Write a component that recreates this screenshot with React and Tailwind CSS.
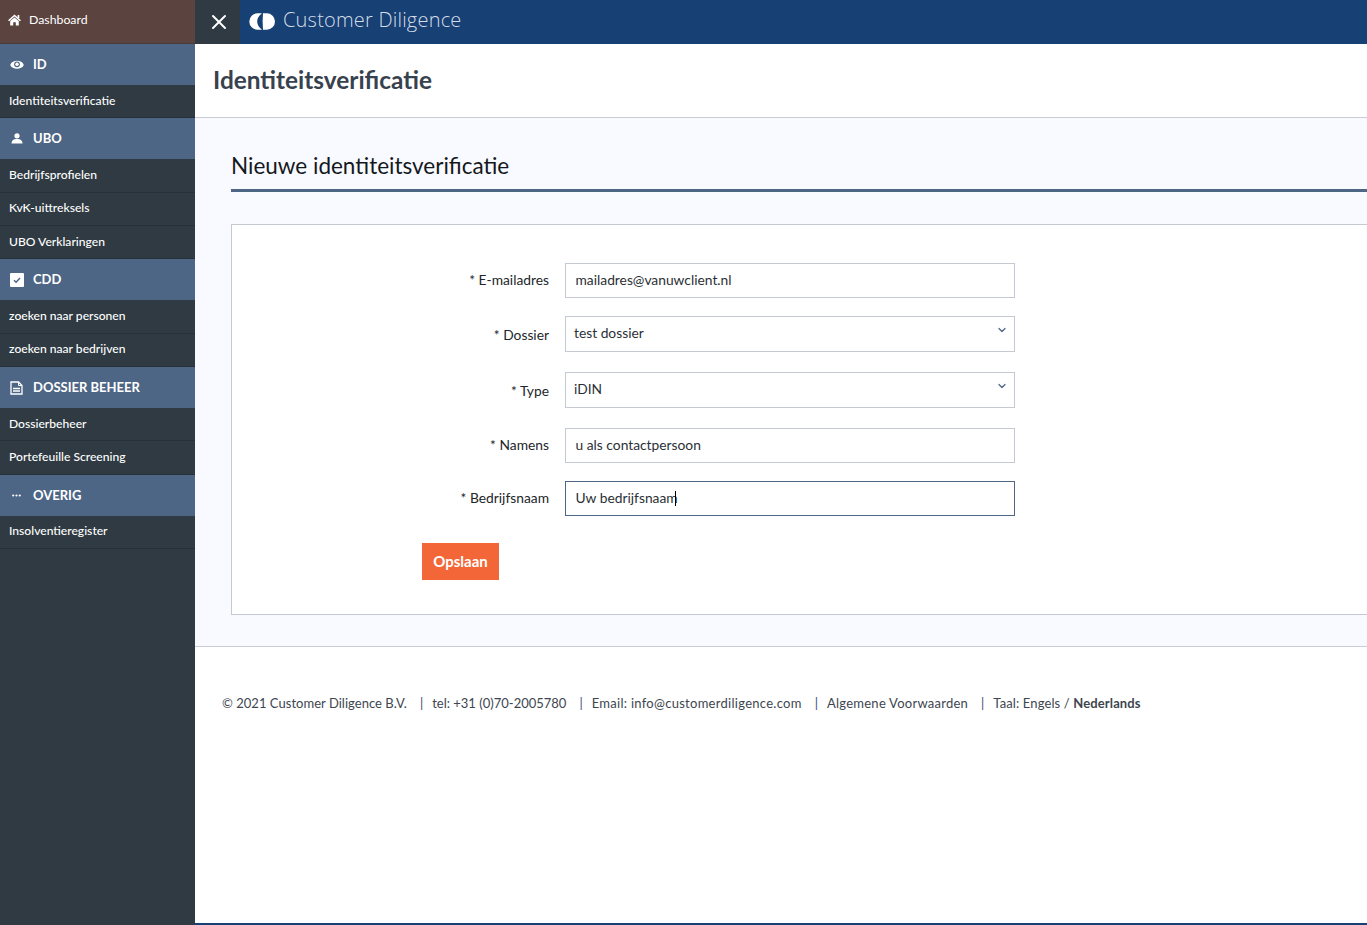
import { ChevronDown, X } from 'lucide-react';

const SECTIONS = [
  { title: 'ID', icon: <EyeIcon />, items: ['Identiteitsverificatie'] },
  { title: 'UBO', icon: <UserIcon />, items: ['Bedrijfsprofielen', 'KvK-uittreksels', 'UBO Verklaringen'] },
  { title: 'CDD', icon: <CheckIcon />, items: ['zoeken naar personen', 'zoeken naar bedrijven'] },
  { title: 'DOSSIER BEHEER', icon: <FileIcon />, items: ['Dossierbeheer', 'Portefeuille Screening'] },
  { title: 'OVERIG', icon: <DotsIcon />, items: ['Insolventieregister'] },
];

const FOOTER = [
  { text: '© 2021 Customer Diligence B.V.', className: 'tracking-[0.03px]' },
  { text: 'tel: +31 (0)70-2005780', className: '' },
  { text: 'Email: info@customerdiligence.com', className: 'tracking-[0.28px]' },
  { text: 'Algemene Voorwaarden', className: 'tracking-[0.25px]' },
];

function HomeIcon() {
  return (
    <svg width="13" height="12" viewBox="0 0 13 12" fill="white">
      <path d="M6.5 0.5 L13 6.3 L11.8 7.2 L6.5 2.6 L1.2 7.2 L0 6.3 Z" />
      <path d="M2.2 7 L6.5 3.4 L10.8 7 V11.6 H7.8 V8.2 H5.2 V11.6 H2.2 Z" />
      <rect x="9.6" y="1" width="1.7" height="3" />
    </svg>
  );
}

function EyeIcon() {
  return (
    <svg width="14" height="10" viewBox="0 0 14 10" fill="none">
      <path d="M0.2 5 C2.2 -0.6 11.8 -0.6 13.8 5 C11.8 10 2.2 10 0.2 5 Z" fill="white" />
      <circle cx="7" cy="4.3" r="2.9" fill="#4d6685" />
      <circle cx="7" cy="4.3" r="1.7" fill="white" />
    </svg>
  );
}

function UserIcon() {
  return (
    <svg width="12" height="11" viewBox="0 0 12 11" fill="white">
      <circle cx="6" cy="2.8" r="2.6" />
      <path d="M0.5 10.5 C0.5 7.4 2.8 6 6 6 C9.2 6 11.5 7.4 11.5 10.5 Z" />
    </svg>
  );
}

function CheckIcon() {
  return (
    <svg width="14" height="14" viewBox="0 0 14 14">
      <rect width="14" height="14" rx="1" fill="white" />
      <path d="M4 7.2 L6.1 9.2 L10 5" fill="none" stroke="#4d6685" strokeWidth="1.5" />
    </svg>
  );
}

function FileIcon() {
  return (
    <svg width="13" height="14" viewBox="0 0 13 14" fill="none" stroke="white">
      <path d="M1 1 H8.5 L12 4.5 V13 H1 Z" strokeWidth="1.3" />
      <path d="M8.5 1 V4.5 H12" strokeWidth="1" />
      <path d="M3 7.5 H10 M3 10 H10" strokeWidth="1.3" />
    </svg>
  );
}

function DotsIcon() {
  return (
    <svg width="9" height="3" viewBox="0 0 9 3" fill="white">
      <circle cx="1.2" cy="1.5" r="1.1" />
      <circle cx="4.5" cy="1.5" r="1.1" />
      <circle cx="7.8" cy="1.5" r="1.1" />
    </svg>
  );
}

function Logo() {
  return (
    <svg width="26" height="17" viewBox="0 0 26 17" fill="white">
      <path d="M13 0.3 H8.5 A8.2 8.2 0 0 0 8.5 16.7 H13 C9.6 14 8.2 11.3 8.2 8.5 C8.2 5.7 9.6 3 13 0.3 Z" />
      <path d="M14 0.3 H17.8 A8.2 8.2 0 0 1 17.8 16.7 H14 Q13.2 8.5 14 0.3 Z" />
    </svg>
  );
}

function Field({ label, value, mb = 'mb-[18px]', focused }) {
  return (
    <div className={`flex items-center ${mb}`}>
      <label className="w-[184px] pr-4 text-right text-[13.8px] text-[#22262a] shrink-0">* {label}</label>
      <div className={`w-[450px] h-[35px] border flex items-center pl-[9.5px] text-[13.8px] text-[#2a3036] bg-white ${focused ? 'border-[#4d6685]' : 'border-[#c5c9d2]'}`}>
        {value}
        {focused && <span className="inline-block -ml-[3px] w-px h-[15px] bg-black" />}
      </div>
    </div>
  );
}

function Select({ label, value, mb }) {
  return (
    <div className={`flex items-center ${mb}`}>
      <label className="w-[184px] pr-4 text-right text-[13.8px] text-[#22262a] shrink-0 pt-[2px]">* {label}</label>
      <div className="w-[450px] h-[36px] border border-[#c5c9d2] flex justify-between pl-2 pr-[6px] text-[13.8px] text-[#2a3036] bg-white">
        <span className="self-center pb-[2px]">{value}</span>
        <ChevronDown size={12} strokeWidth={2.5} className="text-[#4d6685] mt-[7px]" />
      </div>
    </div>
  );
}

export default function App() {
  return (
    <div className="flex h-[925px] w-[1367px] overflow-hidden bg-white font-['Lato','Noto_Sans',sans-serif]">
      <aside className="w-[195px] shrink-0 bg-[#2f3a42] text-white">
        <div className="h-[44px] bg-[#5b4340] flex items-center pl-2 pb-[3px] gap-[8px] text-[12.3px] border-b border-[#4a3a3a]">
          <HomeIcon />
          Dashboard
        </div>
        {SECTIONS.map((section) => (
          <div key={section.title}>
            <div className="h-[41px] bg-[#4d6685] flex items-center font-bold text-[13px]">
              <span className="w-[33px] flex justify-center">{section.icon}</span>
              {section.title}
            </div>
            {section.items.map((item) => (
              <div key={item} className="h-[33.35px] flex items-center pl-[9px] pb-[1px] text-[12.1px] font-medium border-b border-[#27313a]">
                {item}
              </div>
            ))}
          </div>
        ))}
      </aside>

      <div className="flex-1 flex flex-col min-w-0">
        <header className="h-[44px] bg-[#174074] flex items-center shrink-0">
          <div className="w-[45px] h-full bg-[#2f3a42] flex items-center justify-center pl-[2px]">
            <X size={24} strokeWidth={2} className="text-white" />
          </div>
          <div className="ml-[9px] pb-[2px]"><Logo /></div>
          <span className="ml-[8px] pb-[4px] text-[20px] text-[#d5dde8] font-light tracking-[0.2px] font-['Open_Sans',sans-serif]">Customer Diligence</span>
        </header>

        <div className="h-[74px] flex items-center pl-[18px] pb-[1px] shrink-0 border-b border-[#c8ccd4]">
          <h1 className="text-[24.4px] font-bold text-[#38424e]">Identiteitsverificatie</h1>
        </div>

        <main className="h-[529px] shrink-0 bg-[#f9faff] border-b border-[#c8ccd4] pl-9 pt-[32px]">
          <h2 className="text-[22.5px] leading-[30px] text-[#14181c] pt-[1px] pb-[8px] border-b-[3px] border-[#4d6685]">Nieuwe identiteitsverificatie</h2>
          <div className="mt-[32px] h-[391px] bg-white border border-[#c5c9d2] border-r-0 pt-[38px] pl-[149px]">
            <Field label="E-mailadres" value="mailadres@vanuwclient.nl" />
            <Select label="Dossier" value="test dossier" mb="mb-[20px]" />
            <Select label="Type" value="iDIN" mb="mb-[20px]" />
            <Field label="Namens" value="u als contactpersoon" />
            <Field label="Bedrijfsnaam" value="Uw bedrijfsnaam" focused mb="mb-0" />
            <button className="block mt-[27px] ml-[41px] w-[77px] h-[37px] pb-[1px] bg-[#f26638] text-white font-bold text-[15px]">Opslaan</button>
          </div>
        </main>

        <footer className="flex-1 pl-[27px] pt-[47px] text-[13px] text-[#3d4650]">
          {FOOTER.map((part) => (
            <span key={part.text}>
              <span className={part.className}>{part.text}</span>
              <span className="ml-[13px] mr-[9px] text-[#3d4a70]">|</span>
            </span>
          ))}
          <span className="tracking-[0.12px]">Taal: Engels / <span className="font-bold">Nederlands</span></span>
        </footer>
        <div className="h-[2px] bg-[#174074] shrink-0" />
      </div>
    </div>
  );
}
